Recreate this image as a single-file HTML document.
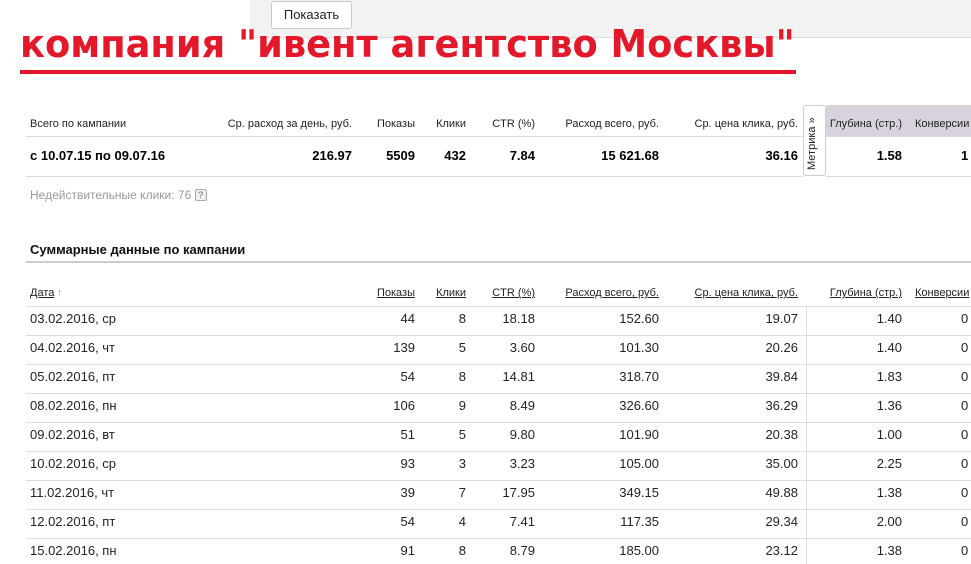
<!DOCTYPE html>
<html><head><meta charset="utf-8"><style>
*{margin:0;padding:0;box-sizing:border-box}
body{width:971px;height:564px;overflow:hidden;background:#fff;font-family:"Liberation Sans",Arial,sans-serif;color:#000;position:relative}
.a{position:absolute;white-space:nowrap}
.r{text-align:right}
.h{font-size:11px;color:#222}
.u{text-decoration:underline}
.line{position:absolute;left:26px;right:0;height:1px;background:#ddd}
.c{font-size:13px}
</style></head><body>
<div class="a" style="left:250px;top:0;width:721px;height:38px;background:#f2f2f2;border-bottom:1px solid #ddd"></div>
<div class="a" style="left:271px;top:1px;width:81px;height:28px;background:#fff;border:1px solid #c8c8c8;border-radius:3px;font-size:13px;line-height:26px;text-align:center;color:#222">Показать</div>
<div class="a" style="left:20px;top:22px;font-size:38px;font-weight:bold;color:#e3182a;font-family:'DejaVu Sans Condensed','DejaVu Sans',sans-serif;line-height:44px;transform:scaleX(1.075);transform-origin:left">компания "ивент агентство Москвы"</div>
<div class="a" style="left:20px;top:70px;width:776px;height:4px;background:#e3182a"></div>

<div class="a" style="left:826px;top:105px;width:145px;height:32px;background:#d7d2dc"></div>
<div class="a" style="left:803px;top:105px;width:23px;height:71px;border:1px solid #ccc;border-radius:3px;background:#fff"></div>
<div class="a" style="left:806px;top:170px;transform:rotate(-90deg);transform-origin:left top;font-size:11px;color:#222">Метрика »</div>
<div class="a h" style="left:30px;top:118px">Всего по кампании</div>
<div class="a h r" style="right:619px;top:118px">Ср. расход за день, руб.</div>
<div class="a h r" style="right:556px;top:118px">Показы</div>
<div class="a h r" style="right:505px;top:118px">Клики</div>
<div class="a h r" style="right:436px;top:118px">CTR (%)</div>
<div class="a h r" style="right:312px;top:118px">Расход всего, руб.</div>
<div class="a h r" style="right:173px;top:118px">Ср. цена клика, руб.</div>
<div class="a h r" style="right:69px;top:118px">Глубина (стр.)</div>
<div class="a h" style="left:915px;top:118px">Конверсии</div>
<div class="a" style="left:26px;top:136px;width:777px;height:1px;background:#ddd"></div>
<div class="a" style="left:826px;top:136px;width:145px;height:1px;background:#ddd"></div>
<div class="a c" style="left:30px;top:148px;font-weight:bold">с 10.07.15 по 09.07.16</div>
<div class="a c r" style="right:619px;top:148px;font-weight:bold">216.97</div>
<div class="a c r" style="right:556px;top:148px;font-weight:bold">5509</div>
<div class="a c r" style="right:505px;top:148px;font-weight:bold">432</div>
<div class="a c r" style="right:436px;top:148px;font-weight:bold">7.84</div>
<div class="a c r" style="right:312px;top:148px;font-weight:bold">15 621.68</div>
<div class="a c r" style="right:173px;top:148px;font-weight:bold">36.16</div>
<div class="a c r" style="right:69px;top:148px;font-weight:bold">1.58</div>
<div class="a c" style="left:961px;top:148px;font-weight:bold">1</div>
<div class="a" style="left:26px;top:176px;width:777px;height:1px;background:#ddd"></div>
<div class="a" style="left:826px;top:176px;width:145px;height:1px;background:#ddd"></div>
<div class="a" style="left:30px;top:188px;font-size:12px;color:#999">Недействительные клики: 76 <span style="display:inline-block;width:12px;height:12px;border:1px solid #aaa;border-radius:2px;font-size:9px;line-height:10px;text-align:center;color:#666;background:#eee;vertical-align:1px">?</span></div>

<div class="a" style="left:30px;top:242px;font-size:13px;font-weight:bold;color:#111">Суммарные данные по кампании</div>
<div class="a" style="left:26px;top:261px;width:945px;height:2px;background:#ccc"></div>
<div class="a h u" style="left:30px;top:287px">Дата</div><div class="a h" style="left:57px;top:287px;color:#999">↑</div>
<div class="a h r u" style="right:556px;top:287px">Показы</div>
<div class="a h r u" style="right:505px;top:287px">Клики</div>
<div class="a h r u" style="right:436px;top:287px">CTR (%)</div>
<div class="a h r u" style="right:312px;top:287px">Расход всего, руб.</div>
<div class="a h r u" style="right:173px;top:287px">Ср. цена клика, руб.</div>
<div class="a h r u" style="right:69px;top:287px">Глубина (стр.)</div>
<div class="a h u" style="left:915px;top:287px">Конверсии</div>
<div class="a" style="left:806px;top:306px;width:1px;height:258px;background:#ddd"></div>
<div id="rows"></div>
<script>
var d=[["03.02.2016, ср",44,8,"18.18","152.60","19.07","1.40"],["04.02.2016, чт",139,5,"3.60","101.30","20.26","1.40"],["05.02.2016, пт",54,8,"14.81","318.70","39.84","1.83"],["08.02.2016, пн",106,9,"8.49","326.60","36.29","1.36"],["09.02.2016, вт",51,5,"9.80","101.90","20.38","1.00"],["10.02.2016, ср",93,3,"3.23","105.00","35.00","2.25"],["11.02.2016, чт",39,7,"17.95","349.15","49.88","1.38"],["12.02.2016, пт",54,4,"7.41","117.35","29.34","2.00"],["15.02.2016, пн",91,8,"8.79","185.00","23.12","1.38"]];
var R=[556,505,436,312,173,69],h="";
d.forEach(function(r,i){var y=306+i*29;h+='<div class="line" style="top:'+y+'px"></div>';var t=y+5;
h+='<div class="a c" style="left:30px;top:'+t+'px;color:#222">'+r[0]+'</div>';
for(var k=0;k<6;k++)h+='<div class="a c r" style="right:'+R[k]+'px;top:'+t+'px;color:#222">'+r[k+1]+'</div>';
h+='<div class="a c" style="left:961px;top:'+t+'px;color:#222">0</div>';});
document.getElementById("rows").innerHTML=h;
</script>
</body></html>
